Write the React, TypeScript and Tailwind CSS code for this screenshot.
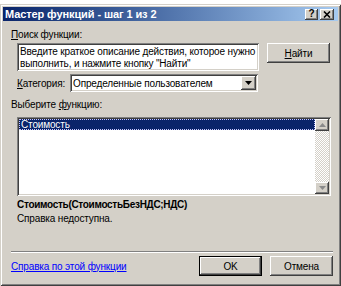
import { FC, ReactNode } from "react";

const raised =
  "bg-[#d4d0c8] shadow-[inset_-1px_-1px_0_#404040,inset_1px_1px_0_#fff,inset_-2px_-2px_0_#808080,inset_2px_2px_0_#d4d0c8]";
const sunken =
  "bg-white shadow-[inset_1px_1px_0_#808080,inset_-1px_-1px_0_#fff,inset_2px_2px_0_#404040,inset_-2px_-2px_0_#d4d0c8]";

const TitleButton: FC<{ children: ReactNode; w: string }> = ({ children, w }) => (
  <div
    className={`${raised} ${w} h-[11px] flex items-center justify-center text-[10px] font-bold leading-none text-black`}
  >
    {children}
  </div>
);

const Button: FC<{ label: ReactNode; w: string; isDefault?: boolean }> = ({
  label,
  w,
  isDefault,
}) => (
  <div className={`${w} h-[20px] ${isDefault ? "border border-black" : ""}`}>
    <div className={`${raised} w-full h-full flex items-center justify-center`}>
      {label}
    </div>
  </div>
);

const ScrollButton: FC<{ up?: boolean }> = ({ up }) => (
  <div className={`${raised} w-[14px] h-[12px] flex items-center justify-center`}>
    <svg width="7" height="4" viewBox="0 0 7 4">
      <path
        d={up ? "M3.5 0 L7 4 L0 4 Z" : "M0 0 L7 0 L3.5 4 Z"}
        fill="#8a8a8a"
      />
    </svg>
  </div>
);

const App: FC = () => {
  return (
    <div
      className="w-[341px] h-[286px] bg-white pt-[4px] text-[10px] leading-[13px] tracking-[-0.15px] text-black whitespace-nowrap"
      style={{ fontFamily: '"Liberation Sans", Arial, sans-serif' }}
    >
      <div className="w-[341px] h-[282px] bg-[#d4d0c8] p-[3px] shadow-[inset_1px_1px_0_#d4d0c8,inset_-1px_-1px_0_#404040,inset_2px_2px_0_#fff,inset_-2px_-2px_0_#808080] flex flex-col">
        {/* title bar */}
        <div className="h-[14px] flex items-center justify-between pl-[2px] pr-[4px] bg-linear-to-r from-[#0a246a] to-[#a6caf0]">
          <span className="text-white font-bold text-[11px] tracking-[-0.1px]">
            Мастер функций - шаг 1 из 2
          </span>
          <div className="flex gap-[2px]">
            <TitleButton w="w-[13px]">?</TitleButton>
            <TitleButton w="w-[14px]">
              <svg width="8" height="7" viewBox="0 0 8 7">
                <path d="M1 0.5 L7 6.5 M7 0.5 L1 6.5" stroke="#000" strokeWidth="1.6" />
              </svg>
            </TitleButton>
          </div>
        </div>

        {/* body */}
        <div className="flex flex-col pl-[8px] pr-[5px]">
          <div className="mt-[7px] h-[13px]">
            <u>П</u>оиск функции:
          </div>

          <div className="mt-[2px] ml-[6px] flex gap-[8px]">
            <div className={`${sunken} w-[242px] h-[28px] pl-[3px] pt-[3px] leading-[12px]`}>
              Введите краткое описание действия, которое нужно
              <br />
              выполнить, и нажмите кнопку "Найти"
            </div>
            <Button
              w="w-[63px]"
              label={
                <span>
                  <u>Н</u>айти
                </span>
              }
            />
          </div>

          <div className="mt-[3px] ml-[6px] flex items-center">
            <span className="w-[53px]">
              <u>К</u>атегория:
            </span>
            <div className={`${sunken} w-[188px] h-[18px] flex items-center justify-between pl-[3px] pr-[2px]`}>
              <span>Определенные пользователем</span>
              <div className={`${raised} w-[15px] h-[14px] flex items-center justify-center`}>
                <svg width="7" height="4" viewBox="0 0 7 4">
                  <path d="M0 0 L7 0 L3.5 4 Z" fill="#000" />
                </svg>
              </div>
            </div>
          </div>

          <div className="mt-[6px] h-[13px]">
            Выберите <u>ф</u>ункцию:
          </div>

          <div className={`${sunken} mt-[6px] ml-[6px] w-[314px] h-[79px] p-[2px] flex`}>
            <div className="flex-1">
              <div className="h-[11px] bg-[#0a246a] text-white text-[10px] leading-[9px] pl-[1px] border border-dotted border-[#c8c8ff]">
                Стоимость
              </div>
            </div>
            <div className="w-[14px] flex flex-col justify-between bg-[repeating-conic-gradient(#d4d0c8_0_25%,#ffffff_0_50%)] bg-[length:2px_2px]">
              <ScrollButton up />
              <ScrollButton />
            </div>
          </div>

          <div className="mt-[2px] ml-[6px] h-[13px] font-bold tracking-[-0.3px]">
            Стоимость(СтоимостьБезНДС;НДС)
          </div>
          <div className="mt-[1px] ml-[6px] h-[13px]">Справка недоступна.</div>

          <div className="mt-[26px] h-[2px] border-t border-t-[#808080] border-b border-b-white" />

          <div className="mt-[3px] flex items-center gap-[8px]">
            <span className="flex-1 text-[#0000ff] underline">
              Справка по этой функции
            </span>
            <Button w="w-[63px]" isDefault label="OK" />
            <Button w="w-[63px]" label="Отмена" />
          </div>
        </div>
      </div>
    </div>
  );
};

export default App;
